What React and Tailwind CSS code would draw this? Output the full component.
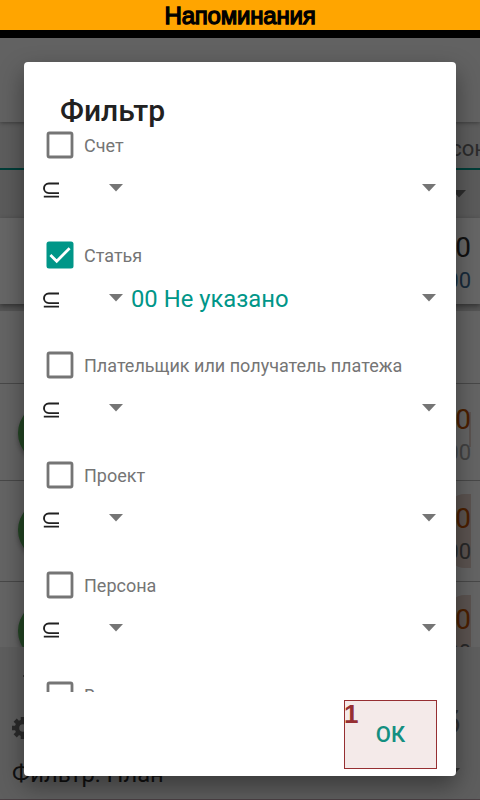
import React from "react";

const filters = [
  { label: "Счет" },
  { label: "Статья", checked: true, value: "00 Не указано" },
  { label: "Плательщик или получатель платежа" },
  { label: "Проект" },
  { label: "Персона" },
  { label: "В" },
];

function Caret({ className = "" }) {
  return (
    <svg width="14" height="8" viewBox="0 0 14 8" className={`shrink-0 ${className}`}>
      <path d="M0 0h14L7 7.6z" fill="currentColor" />
    </svg>
  );
}

function Check({ checked }) {
  return (
    <svg width="28" height="28" viewBox="0 0 28 28" className="shrink-0">
      {checked ? (
        <>
          <rect x="0.5" y="0.5" width="27" height="27" rx="2.5" fill="#009688" />
          <path d="M4.4 14l6.3 6.2L23.6 7.2" fill="none" stroke="#fff" strokeWidth="2.8" />
        </>
      ) : (
        <rect x="2" y="2" width="24" height="24" rx="1.5" fill="none" stroke="#757575" strokeWidth="2.8" />
      )}
    </svg>
  );
}

function FilterRow({ label, checked, value }) {
  return (
    <div className="h-[110px] shrink-0">
      <div className="flex h-[28px] items-center pl-[22px]">
        <Check checked={checked} />
        <span className="ml-[10px] whitespace-nowrap pt-[2px] text-[18px] leading-[28px] text-[#757575]">{label}</span>
      </div>
      <div className="flex h-[58px] items-center pl-[19px] pr-5">
        <svg width="16" height="17" viewBox="0 0 16 17" className="mt-[4px] shrink-0">
          <path d="M16 1.5H5.8a4.8 4.8 0 0 0 0 9.6H16M.8 14.6H16" fill="none" stroke="#212121" strokeWidth="1.9" />
        </svg>
        <Caret className="ml-[50px] text-[#757575]" />
        <span className="ml-2 flex-1 whitespace-nowrap pt-[2px] text-[23.8px] leading-8 text-[#009688]">{value}</span>
        <Caret className="text-[#757575]" />
      </div>
    </div>
  );
}

function Payment({ className, blockClass, amountClass }) {
  return (
    <div className={`flex shrink-0 justify-between overflow-hidden border-t border-[#484848] pl-[18px] pr-[9px] ${className}`}>
      <div className="mt-[19px] size-[60px] shrink-0 rounded-full bg-[#234524] shadow-[0_3px_4px_rgba(0,0,0,0.3)]" />
      <div className={`flex flex-col items-end ${blockClass}`}>
        <span className="text-[28px] leading-[32px] text-[#4b1f00]">00</span>
        <span className={`mt-[2px] text-[22px] leading-[30px] ${amountClass}`}>00</span>
      </div>
    </div>
  );
}

export default function App() {
  return (
    <div className="relative flex h-[800px] w-[480px] flex-col overflow-hidden bg-[#646464] font-[Roboto,sans-serif]">
      <header className="flex h-[30px] shrink-0 items-center justify-center bg-[#ffa500]">
        <h1 className="pt-[2px] font-['Liberation_Sans',sans-serif] text-[24px] leading-[28px] tracking-[-0.2px] text-black [-webkit-text-stroke:1.3px_black]">
          Напоминания
        </h1>
      </header>
      <div className="h-2 shrink-0 bg-black" />
      <div className="z-10 h-[84px] shrink-0 bg-[#626262] shadow-[0_1px_4px_rgba(0,0,0,0.35)]" />
      <nav className="flex h-[48px] shrink-0 items-center justify-end overflow-hidden border-b-2 border-[#003d38] bg-[#5d5d5d]">
        <span className="-mr-[19px] pt-[6px] text-[22px] text-[#2b2b2b]">Персона</span>
      </nav>
      <div className="flex h-[48px] shrink-0 items-center justify-end bg-[#5b5b5b] pr-[14px] text-[#2d2d2d]">
        <Caret />
      </div>
      <section className="z-10 flex h-[86px] shrink-0 flex-col items-end bg-[#666] pr-[9px] pt-[14px] shadow-[0_2px_5px_rgba(0,0,0,0.4)]">
        <span className="text-[28px] leading-[32px] text-[#111]">00</span>
        <span className="mt-[1px] text-[22px] leading-[32px] text-[#182b3b]">00</span>
      </section>
      <div className="h-[7px] shrink-0 bg-[#555]" />
      <div className="h-[72px] shrink-0" />
      <Payment
        className="h-[97px]"
        blockClass="mt-[20px] bg-[linear-gradient(#5b5350,#5b5350)] bg-[length:2px_35px] bg-[position:right_8px] bg-no-repeat"
        amountClass="text-[#424242]"
      />
      <Payment
        className="h-[101px]"
        blockClass="mt-[13px] h-[74px] w-[24px] flex-none rounded-l-[18px] bg-[#5b5350] pt-[9px]"
        amountClass="text-[#282828]"
      />
      <Payment
        className="h-[66px]"
        blockClass="mt-[13px] h-[74px] w-[24px] flex-none rounded-l-[18px] bg-[#5b5350] pt-[9px]"
        amountClass="text-[#282828]"
      />
      <footer className="flex shrink-0 grow flex-col border-b border-[#4a4044] bg-[#5e5e5e] px-3">
        <div className="ml-[11px] mt-[28px] size-[2px] shrink-0 bg-[#333]" />
        <div className="mt-[36px] flex h-[30px] items-center justify-between">
          <svg width="22" height="22" viewBox="0 0 22 22" className="text-[#2b2b2b]">
            <circle cx="11" cy="11" r="6" fill="none" stroke="currentColor" strokeWidth="4.4" />
            <path d="M11 0v4M11 18v4M0 11h4M18 11h4M3.2 3.2L6 6M16 16l2.8 2.8M3.2 18.8L6 16M16 6l2.8-2.8" stroke="currentColor" strokeWidth="4.5" />
          </svg>
          <span className="-mt-[10px] mr-[8px] text-[30px] leading-[30px] text-[#303030]">б</span>
        </div>
        <div className="mt-[14px] flex h-[34px] items-center justify-between">
          <span className="text-[23.8px] leading-[32px] text-[#111]">Фильтр: План</span>
          <Caret className="mr-[8px] mt-[-4px] text-[#2d2d2d]" />
        </div>
      </footer>

      <div className="absolute inset-x-6 top-[62px] z-20 flex h-[714px] flex-col rounded-[4px] bg-white shadow-[0_10px_24px_rgba(0,0,0,0.4)]">
        <h2 className="h-[69px] shrink-0 pl-9 pt-[29px] text-[30px] font-medium leading-[40px] text-[#212121]">Фильтр</h2>
        <div className="h-[561px] shrink-0 overflow-hidden">
          {filters.map((f) => (
            <FilterRow key={f.label} {...f} />
          ))}
        </div>
        <div className="flex justify-end pr-[19px] pt-[8px]">
          <button className="relative flex h-[69px] w-[93px] items-center justify-center border border-[#962f32] bg-[#f4eae9] text-[22px] font-medium text-[#138f80]">
            <span className="absolute left-[-1px] top-0 font-['Liberation_Sans',sans-serif] text-[26px] font-bold leading-[26px] text-[#962f32]">1</span>
            ОК
          </button>
        </div>
      </div>
    </div>
  );
}
